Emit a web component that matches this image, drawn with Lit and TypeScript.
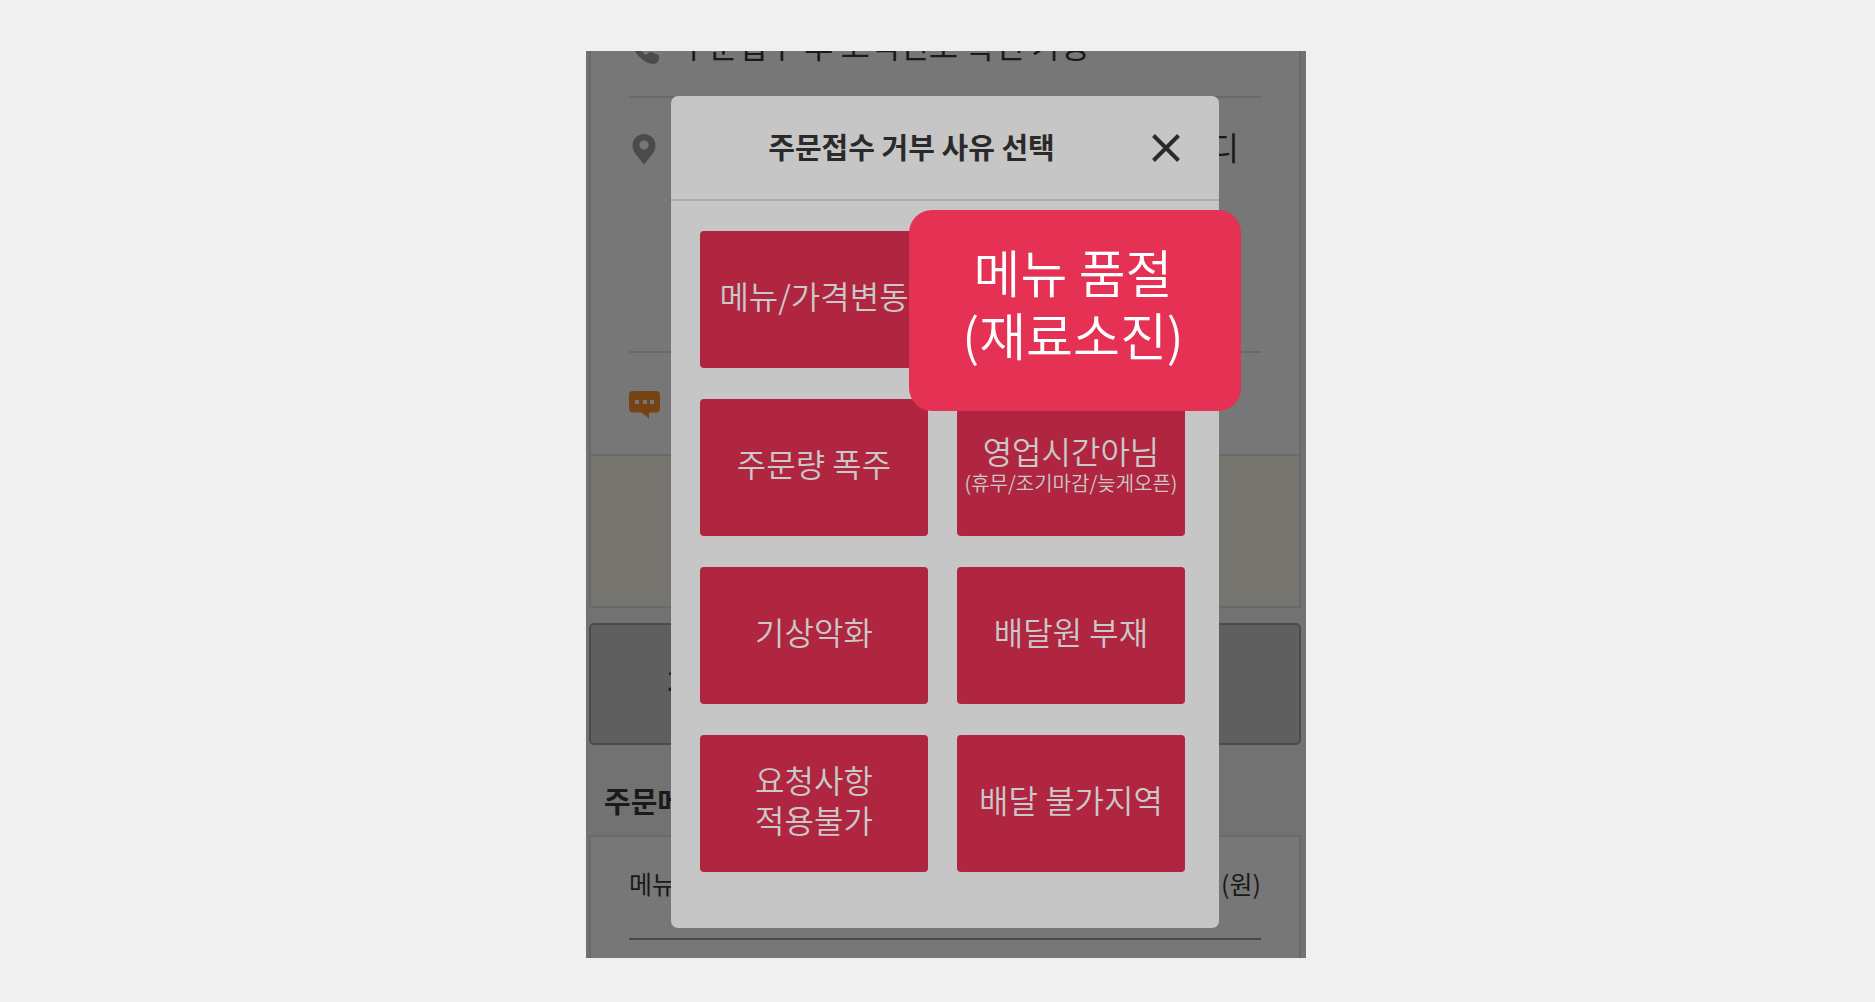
import { LitElement, html, css, nothing } from "lit";
import { customElement } from "lit/decorators.js";

interface Reason {
  lines: string[];
  note?: string;
  selected?: boolean;
}

const REASONS: Reason[] = [
  { lines: ["메뉴/가격변동"] },
  { lines: ["메뉴 품절", "(재료소진)"], selected: true },
  { lines: ["주문량 폭주"] },
  { lines: ["영업시간아님"], note: "(휴무/조기마감/늦게오픈)" },
  { lines: ["기상악화"] },
  { lines: ["배달원 부재"] },
  { lines: ["요청사항", "적용불가"] },
  { lines: ["배달 불가지역"] },
];

const FONT = css`"Noto Sans CJK KR", "Noto Sans", sans-serif`;

/** The order sheet that lies dimmed behind the dialog. */
@customElement("order-sheet")
export class OrderSheet extends LitElement {
  static styles = css`
    :host {
      display: flex;
      flex-direction: column;
      box-sizing: border-box;
      padding: 0 5px 0 3px;
      overflow: hidden;
      background: #727272;
      color: #1a1a1a;
      font-family: ${FONT};
    }
    .info {
      border: 2px solid #696969;
      border-top: 0;
      background: #777;
    }
    .row {
      display: flex;
      gap: 20px;
      margin: 0 38px;
      box-sizing: border-box;
      border-bottom: 2px solid #696969;
      font-size: 32px;
      line-height: 40px;
    }
    .phone {
      height: 47px;
      align-items: flex-end;
      padding-bottom: 32px;
      overflow: hidden;
    }
    .address {
      height: 255px;
      padding-top: 32px;
      justify-content: space-between;
    }
    .address .end {
      margin-top: -4px;
      padding-right: 22px;
    }
    .message {
      height: 101px;
      padding-top: 38px;
      border-bottom: 0;
    }
    .memo {
      height: 150px;
      border-top: 2px solid #696969;
      background: #76746e;
    }
    .icon {
      display: block;
      flex: none;
      fill: #4b4b4b;
    }
    .icon.orange {
      fill: #754314;
    }
    .map {
      display: block;
      height: 122px;
      margin: 15px 0 0;
      padding: 0 76px 4px;
      box-sizing: border-box;
      border: 2px solid #4b4b4b;
      border-radius: 5px;
      background: #5f5f5f;
      color: #1a1a1a;
      font: 500 28px/40px ${FONT};
      text-align: left;
    }
    h2 {
      margin: 35px 15px 15px;
      font-size: 29px;
      line-height: 40px;
      font-weight: 700;
    }
    .menu {
      flex: 1;
      padding: 0 38px;
      border: 2px solid #696969;
      border-bottom: 0;
      background: #777;
    }
    table {
      width: 100%;
      border-collapse: collapse;
      font-size: 25px;
      line-height: 36px;
    }
    th {
      height: 102px;
      padding: 0 0 10px;
      box-sizing: border-box;
      border-bottom: 2px solid #4a4a4a;
      font-weight: 400;
      text-align: left;
    }
    th:last-child {
      text-align: right;
    }
  `;

  render() {
    return html`
      <section class="info">
        <div class="row phone">
          <svg class="icon" width="30" height="30" viewBox="0 0 30 30" aria-hidden="true">
            <path d="M4 4.500Q6 2 9 3L12 9Q12.500 11 9.500 13Q12 18 17.500 21Q19.500 17.500 22 18L28.500 20.500Q30.500 21.500 30 24Q29.500 29.500 25 30Q17 30 10 22.500Q2 14 4 4.500Z" />
          </svg>
          <span>주문접수 후 고객번호 확인 가능</span>
        </div>
        <div class="row address">
          <svg class="icon" width="30" height="38" viewBox="0 0 30 38" aria-hidden="true">
            <path fill-rule="evenodd" d="M15 4C8.500 4 3.500 9 3.500 15.500C3.500 23 10.500 28 15 34.500C19.500 28 26.500 23 26.500 15.500C26.500 9 21.500 4 15 4ZM15 10.500A4.600 4.600 0 1 1 15 19.700A4.600 4.600 0 1 1 15 10.500Z" />
          </svg>
          <span class="end">디</span>
        </div>
        <div class="row message">
          <svg class="icon orange" width="31" height="28" viewBox="0 0 31 28" aria-hidden="true">
            <path fill-rule="evenodd" d="M4 0H27Q31 0 31 4V17Q31 21.500 27 21.500H20V27.500L12.500 21.500H4Q0 21.500 0 17V4Q0 0 4 0ZM6 9V13H10V9ZM14 9V13H18V9ZM21 9V13H25V9Z" />
          </svg>
        </div>
        <div class="memo"></div>
      </section>
      <button class="map" type="button">지도</button>
      <h2>주문메뉴</h2>
      <section class="menu">
        <table>
          <thead>
            <tr><th scope="col">메뉴</th><th scope="col">(원)</th></tr>
          </thead>
        </table>
      </section>
    `;
  }
}

/** Dialog with the reasons for refusing an order. */
@customElement("reason-dialog")
export class ReasonDialog extends LitElement {
  static styles = css`
    :host {
      display: block;
      border-radius: 7px;
      background: #c6c6c6;
      color: #2a2a2a;
      font-family: ${FONT};
    }
    header {
      display: grid;
      grid-template-columns: 1fr auto;
      gap: 24px;
      align-items: center;
      height: 105px;
      padding: 0 34px 0 29px;
      box-sizing: border-box;
      border-bottom: 2px solid #ababab;
    }
    h1 {
      margin: 0;
      padding-bottom: 4px;
      font-size: 29px;
      line-height: 40px;
      font-weight: 700;
      text-align: center;
    }
    .close {
      padding: 4px;
      border: 0;
      background: none;
      color: inherit;
    }
    .close svg {
      display: block;
      stroke: currentColor;
      stroke-width: 4;
    }
    .grid {
      display: grid;
      grid-template-columns: 1fr 1fr;
      grid-auto-rows: 137px;
      gap: 31px 29px;
      padding: 30px 34px 56px 29px;
    }
    .cell {
      display: grid;
      position: relative;
    }
    .reason {
      display: flex;
      flex-direction: column;
      align-items: center;
      justify-content: center;
      padding: 0 0 10px;
      border: 0;
      border-radius: 4px;
      background: #b02640;
      color: #c9c9c9;
      font: 350 32px/40px ${FONT};
      white-space: nowrap;
    }
    .note {
      font-size: 20px;
      line-height: 26px;
    }
    .selected {
      position: absolute;
      z-index: 1;
      inset: -21px -56px -43px -48px;
      padding: 0 4px 16px 0;
      border-radius: 23px;
      background: #e53153;
      color: #fff;
      font-size: 51px;
      line-height: 63px;
    }
  `;

  render() {
    return html`
      <header>
        <h1>주문접수 거부 사유 선택</h1>
        <button class="close" type="button" aria-label="닫기">
          <svg width="30" height="30" viewBox="0 0 30 30" aria-hidden="true">
            <path d="M2.500 2.500L27.500 27.500M27.500 2.500L2.500 27.500" />
          </svg>
        </button>
      </header>
      <div class="grid">
        ${REASONS.map(
          (r) => html`
            <div class="cell">
              <button class="reason ${r.selected ? "selected" : ""}" type="button">
                ${r.lines.map((line) => html`<span>${line}</span>`)}
                ${r.note ? html`<span class="note">${r.note}</span>` : nothing}
              </button>
            </div>
          `,
        )}
      </div>
    `;
  }
}

@customElement("app-root")
export class AppRoot extends LitElement {
  static styles = css`
    :host {
      display: flex;
      justify-content: center;
      box-sizing: border-box;
      min-height: 100vh;
      padding: 51px 0 44px 17px;
      background: #f0f0f0;
    }
    .screen {
      display: grid;
      width: 100%;
      max-width: 720px;
    }
    order-sheet,
    reason-dialog {
      grid-area: 1 / 1;
      min-width: 0;
    }
    reason-dialog {
      align-self: start;
      margin: 45px 87px 30px 85px;
    }
  `;

  render() {
    return html`
      <main class="screen">
        <order-sheet></order-sheet>
        <reason-dialog></reason-dialog>
      </main>
    `;
  }
}
